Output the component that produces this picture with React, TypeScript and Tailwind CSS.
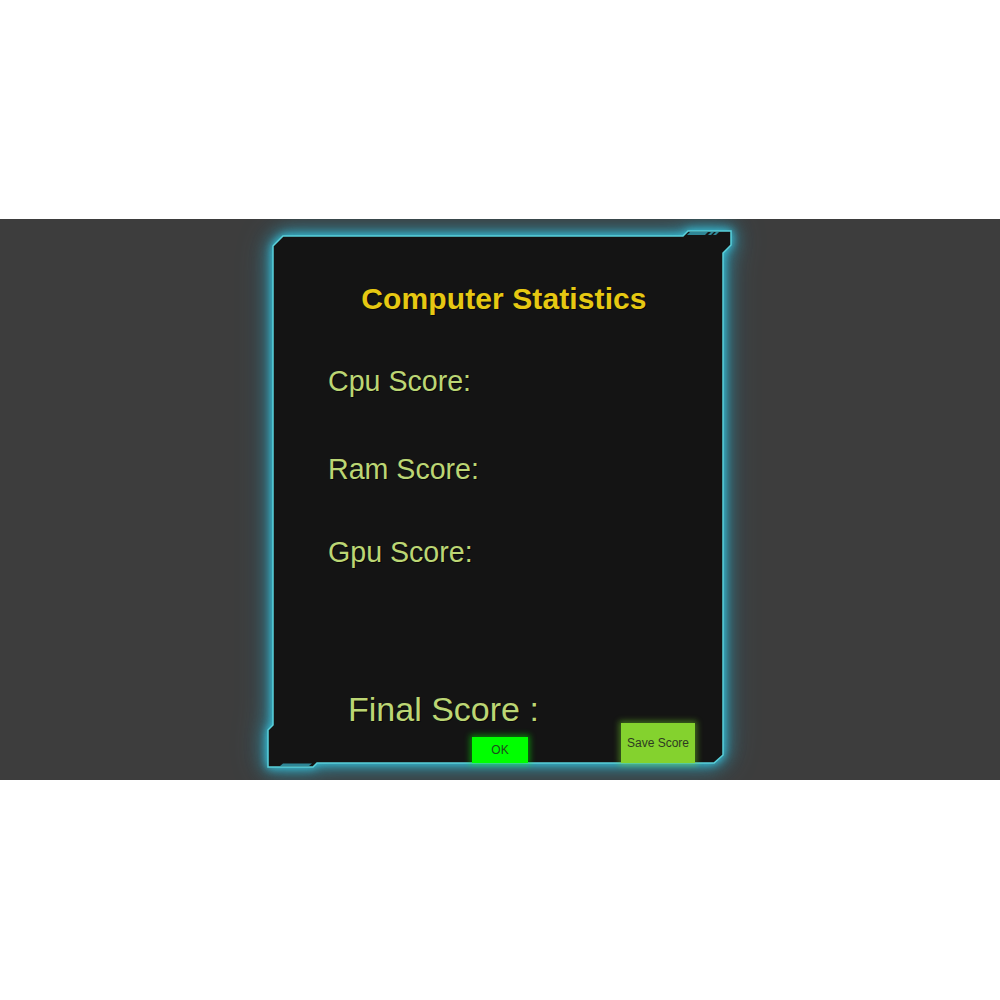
import React from 'react';

// Cut-corner sci-fi frame drawn behind the panel content
function Frame() {
  const outline =
    '5,16 15,6 415,6 420,1 463,1 463,15 455,23 455,525 446,533 49,533 45,537 0,537 0,500 5,495';
  return (
    <svg
      className="absolute inset-0 overflow-visible"
      width="464"
      height="537"
      viewBox="0 0 464 537"
      style={{
        filter:
          'drop-shadow(0 0 4px #3cc6dc) drop-shadow(0 0 8px rgba(40,170,200,0.75)) drop-shadow(0 0 14px rgba(40,150,180,0.45))',
      }}
    >
      <polygon points={outline} fill="#141414" stroke="#5ad0da" strokeWidth="1.5" />
      {/* top-right tab stripes */}
      <polygon points="419,5 422,2 440,2 437,5" fill="#2f8797" />
      <polygon points="440,5 443,2 446,2 443,5" fill="#2f8797" />
      <polygon points="445,5 448,2 451,2 448,5" fill="#2f8797" />
      {/* bottom-left tab */}
      <polygon points="12,536 15,533.5 44,533.5 41,536" fill="#2f8797" />
    </svg>
  );
}

export default function App() {
  const label = 'text-[28.6px] leading-[32px] text-[#bcd674] [text-shadow:1px_1px_0_rgba(0,0,0,0.6)]';
  return (
    <div className="w-[1000px] h-[1000px] bg-white flex flex-col" style={{ fontFamily: '"Liberation Sans", Arial, sans-serif' }}>
      <div className="h-[219px]" />
      <div className="h-[561px] bg-[#3d3d3d] flex justify-center pt-[11px] overflow-hidden">
        <div className="relative w-[464px] h-[537px]">
          <Frame />
          <div className="relative flex flex-col h-full">
            <h1 className="mt-[52px] text-center text-[30px] leading-[34px] font-bold text-[#e6c812] pl-[8px] tracking-[0.1px] [text-shadow:1px_1px_0_rgba(0,0,0,0.6)]">
              Computer Statistics
            </h1>
            <p className={`${label} mt-[49px] ml-[60px]`}>Cpu Score:</p>
            <p className={`${label} mt-[56px] ml-[60px]`}>Ram Score:</p>
            <p className={`${label} mt-[51px] ml-[60px]`}>Gpu Score:</p>
            <p className="mt-[122px] ml-[80px] text-[34px] leading-[38px] text-[#bcd674] [text-shadow:1px_1px_0_rgba(0,0,0,0.6)]">
              Final Score :
            </p>
            <div className="flex items-end mt-[-5px]">
              <button className="ml-[204px] w-[56px] h-[26px] bg-[#00ff00] text-[12px] text-[#1e4a1e] shadow-[0_0_6px_2px_rgba(0,255,0,0.45)]">
                OK
              </button>
              <button className="ml-[93px] w-[74px] h-[40px] bg-[#84d22e] text-[12px] text-[#2e3a22] shadow-[0_0_6px_2px_rgba(120,220,40,0.45)]">
                Save Score
              </button>
            </div>
          </div>
        </div>
      </div>
      <div className="flex-1" />
    </div>
  );
}
